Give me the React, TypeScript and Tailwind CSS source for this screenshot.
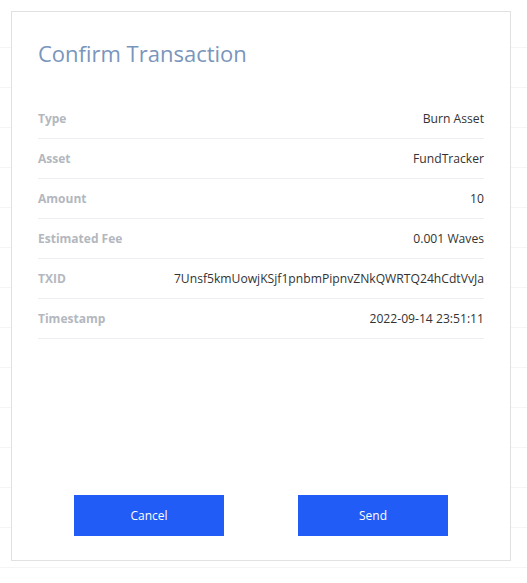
const ROWS = [
  { label: "Type", value: "Burn Asset" },
  { label: "Asset", value: "FundTracker" },
  { label: "Amount", value: "10" },
  { label: "Estimated Fee", value: "0.001 Waves" },
  { label: "TXID", value: "7Unsf5kmUowjKSjf1pnbmPipnvZNkQWRTQ24hCdtVvJa" },
  { label: "Timestamp", value: "2022-09-14 23:51:11" },
];

export default function App() {
  return (
    <div className="relative h-[583px] w-full overflow-hidden bg-white font-['Open_Sans',sans-serif]">
      {/* faint table rows behind the dialog */}
      <div className="pt-2">
        {Array.from({ length: 14 }).map((_, i) => (
          <div key={i} className="h-10 border-b border-[#f4f5f7]" />
        ))}
      </div>

      <div className="absolute left-[11px] top-[11px] flex h-[550px] w-[500px] flex-col border border-[#e1e1e1] bg-white px-[26px] pb-6 pt-[25px]">
        <h1 className="text-[22px] leading-8 font-normal text-[#7a95bc]">Confirm Transaction</h1>

        <div className="mt-[30px]">
          {ROWS.map((r) => (
            <div key={r.label} className="flex h-10 items-center justify-between border-b border-[#eceef2]">
              <span className="text-[12px] font-bold text-[#b3b7be]">{r.label}</span>
              <span className="pt-px text-[12.15px] text-[#333333]">{r.value}</span>
            </div>
          ))}
        </div>

        <div className="flex-1" />

        <div className="flex justify-center gap-[74px]">
          <button className="h-[41px] w-[150px] bg-[#225cf7] text-[12px] text-white">Cancel</button>
          <button className="h-[41px] w-[150px] bg-[#225cf7] text-[12px] text-white">Send</button>
        </div>
      </div>
    </div>
  );
}
